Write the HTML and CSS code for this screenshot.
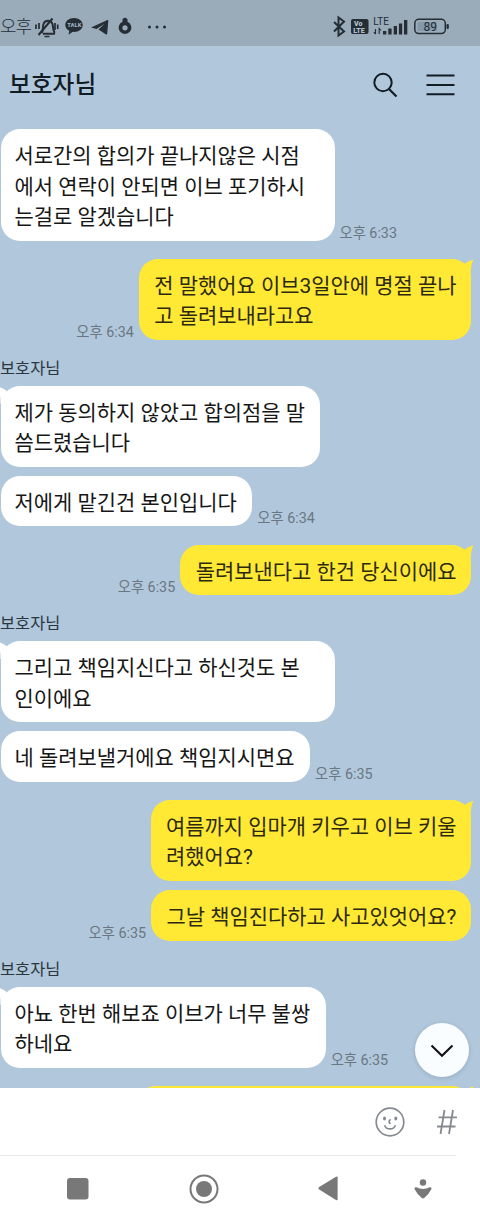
FILE: index.html
```html
<!DOCTYPE html>
<html lang="ko">
<head>
  <meta charset="UTF-8">
  <meta name="viewport" content="width=device-width, initial-scale=1.0">
  <title>보호자님</title>
  <link rel="stylesheet" href="styles.css">
</head>
<body>
  <!-- 상태 표시줄 -->
  <div class="status">
    <span class="status-time">오후</span>
    <svg class="status-left" width="140" height="24" viewBox="0 0 140 24">
      <g fill="none" stroke="#252d35" stroke-width="2">
        <path d="M9 18.800h12M7.500 18c2-2 1-6 2-9 1.300-4.500 7.500-4.500 9 0 .8 3 .2 6.500 2.300 9"/>
        <path d="M4.500 20L18.500 3.500"/>
        <path d="M2 9.500v4.500M5 8v6M21 8v7M23.700 9.500v4.500M10.500 21.500h5" stroke-width="1.700"/>
      </g>
      <path fill="#252d35" d="M40 3c-5 0-8.700 3-8.700 6.900 0 2.500 1.600 4.600 4 5.800l-.8 4 4.300-2.900 1.200.1c5 0 8.700-3.100 8.700-7S45 3 40 3z"/>
      <text x="33.300" y="12.300" class="talk">TALK</text>
      <path fill="#252d35" d="M57 12.500L73.500 5q1-.4.8.7L73.200 18.800q-.3 1.300-1.500.5L64.500 14.500l6-5.800-8 5.200z"/>
      <path fill="#252d35" d="M88.500 4l2.500-1.500L93.500 4v2.800a6.400 6.400 0 1 1-5 0z"/>
      <circle cx="91" cy="12.800" r="2.600" fill="#9aacba"/>
      <g fill="#252d35"><circle cx="115.500" cy="12" r="1.500"/><circle cx="123" cy="12" r="1.500"/><circle cx="130.500" cy="12" r="1.500"/></g>
    </svg>
    <svg class="status-right" width="120" height="24" viewBox="0 0 120 24">
      <path d="M2 7l10 9.500-5.500 4V2.500l5.500 4L2 16.500" fill="none" stroke="#252d35" stroke-width="2"/>
      <rect x="19" y="4" width="17.500" height="15" rx="2" fill="#252d35"/>
      <text x="22" y="10.800" class="volte">Vo</text>
      <text x="21.200" y="17.500" class="volte">LTE</text>
      <text x="41.300" y="9.800" class="lte">LTE</text>
      <path d="M43.500 14v5M41.800 17.200l1.700 1.800M47.200 19v-5.500l1.800 2" fill="none" stroke="#252d35" stroke-width="1.100"/>
      <g fill="#252d35">
        <rect x="51" y="16" width="3.300" height="3.500"/>
        <rect x="56.300" y="13.500" width="3.300" height="6"/>
        <rect x="61.700" y="11" width="3.300" height="8.500"/>
        <rect x="66.900" y="8.500" width="3.300" height="11"/>
        <rect x="72" y="5" width="3.300" height="14.500"/>
      </g>
      <rect x="82.800" y="4.300" width="30.500" height="14.300" rx="4" fill="none" stroke="#252d35" stroke-width="1.500"/>
      <rect x="85.500" y="7" width="19.500" height="9" rx="1" fill="#8499a9"/>
      <rect x="114.500" y="9" width="2.300" height="5" rx="1" fill="#252d35"/>
      <text x="91.500" y="15.800" class="battery">89</text>
    </svg>
  </div>

  <!-- 채팅방 헤더 -->
  <header>
    <h1>보호자님</h1>
    <svg width="26" height="28" viewBox="0 0 26 28">
      <circle cx="11" cy="11.500" r="8.700" fill="none" stroke="#111c25" stroke-width="2"/>
      <path d="M17 18l7.500 7.500" stroke="#111c25" stroke-width="2.200"/>
    </svg>
    <svg class="menu" width="29" height="28" viewBox="0 0 29 28">
      <path d="M.5 4.500h28M.5 14h28M.5 23.200h28" stroke="#111c25" stroke-width="2.100"/>
    </svg>
  </header>

  <!-- 대화 -->
  <main>
    <div class="row">
      <p class="bubble wide">서로간의 합의가 끝나지않은 시점<br>에서 연락이 안되면 이브 포기하시<br>는걸로 알겠습니다</p>
      <time>오후 6:33</time>
    </div>
    <div class="row me first">
      <time>오후 6:34</time>
      <p class="bubble tail">전 말했어요 이브3일안에 명절 끝나<br>고 돌려보내라고요</p>
    </div>
    <h2>보호자님</h2>
    <div class="row">
      <p class="bubble tail">제가 동의하지 않았고 합의점을 말<br>씀드렸습니다</p>
    </div>
    <div class="row next">
      <p class="bubble">저에게 맡긴건 본인입니다</p>
      <time>오후 6:34</time>
    </div>
    <div class="row me first">
      <time>오후 6:35</time>
      <p class="bubble tail">돌려보낸다고 한건 당신이에요</p>
    </div>
    <h2>보호자님</h2>
    <div class="row">
      <p class="bubble wide tail">그리고 책임지신다고 하신것도 본<br>인이에요</p>
    </div>
    <div class="row next">
      <p class="bubble">네 돌려보낼거에요 책임지시면요</p>
      <time>오후 6:35</time>
    </div>
    <div class="row me first">
      <p class="bubble tail">여름까지 입마개 키우고 이브 키울<br>려했어요?</p>
    </div>
    <div class="row me next">
      <time>오후 6:35</time>
      <p class="bubble">그날 책임진다하고 사고있엇어요?</p>
    </div>
    <h2>보호자님</h2>
    <div class="row">
      <p class="bubble tail">아뇨 한번 해보죠 이브가 너무 불쌍<br>하네요</p>
      <time>오후 6:35</time>
    </div>
    <div class="row me first">
      <p class="bubble tail cut"></p>
    </div>
    <button class="down" aria-label="맨 아래로">
      <svg width="24" height="14" viewBox="0 0 24 14"><path d="M1.500 1.500L12 11.700 22.500 1.500" fill="none" stroke="#111" stroke-width="2.100"/></svg>
    </button>
  </main>

  <!-- 입력창 -->
  <div class="input">
    <svg width="30" height="30" viewBox="0 0 30 30" fill="none" stroke="#858a90" stroke-width="1.700">
      <circle cx="15" cy="15" r="13.800"/>
      <path d="M9.500 18.200c2 5 9 5 11 0M15.800 12.500c-2.300.6-2.300 3.800 0 4"/>
      <ellipse cx="9.500" cy="11.500" rx="1.500" ry="1.900" fill="#858a90" stroke="none"/>
      <ellipse cx="20.800" cy="11.500" rx="1.500" ry="1.900" fill="#858a90" stroke="none"/>
    </svg>
    <svg class="hash" width="22" height="26" viewBox="0 0 22 26">
      <path d="M8.500 1L4.500 25M17 1l-4 24M2.500 8.300H21M1 17.500h18.500" fill="none" stroke="#858a90" stroke-width="1.800"/>
    </svg>
  </div>

  <!-- 내비게이션 바 -->
  <nav>
    <svg width="22" height="22" viewBox="0 0 22 22"><rect width="21.500" height="21.500" rx="3" fill="#787878"/></svg>
    <svg class="home" width="30" height="30" viewBox="0 0 30 30">
      <circle cx="15" cy="15" r="13.500" fill="none" stroke="#787878" stroke-width="2"/>
      <circle cx="15" cy="15" r="8" fill="#787878"/>
    </svg>
    <svg class="back" width="20" height="25" viewBox="0 0 20 25"><path d="M.8 11.300Q0 12.300.8 13.200L18 24q1.600.8 1.600-.8V1.500Q19.600 0 18 .8z" fill="#787878"/></svg>
    <svg width="18" height="20" viewBox="0 0 18 20">
      <circle cx="9" cy="3.500" r="3.200" fill="#787878"/>
      <path d="M2.300 8.300q6.700 3.200 13.400 0 2.300-.3 1.800 1.700-2.500 5-7.300 9.100-1.200.9-2.400 0Q3 15 .5 10 0 8 2.300 8.300z" fill="#787878"/>
    </svg>
  </nav>
</body>
</html>
```

FILE: styles.css
```css
* {
  margin: 0;
  padding: 0;
  box-sizing: border-box;
}
body {
  width: 480px;
  height: 1221px;
  display: flex;
  flex-direction: column;
  overflow: hidden;
  font-family: Roboto, "Noto Sans CJK KR", sans-serif;
  background: #fff;
  color: #161616;
}
svg {
  display: block;
  flex: none;
}

/* 상태 표시줄 */
.status {
  height: 46px;
  padding-top: 7px;
  display: flex;
  align-items: center;
  background: #9aacba;
  color: #252d35;
}
.status-time {
  width: 34px;
  font-size: 18px;
  font-weight: 300;
  letter-spacing: -1px;
  line-height: 24px;
  white-space: nowrap;
}
.status-right {
  margin-left: auto;
  margin-right: 28px;
}
.talk {
  font-size: 5.8px;
  font-weight: 900;
  fill: #9aacba;
}
.volte {
  font-size: 7px;
  font-weight: 900;
  fill: #b4c1cc;
}
.lte {
  font-size: 10px;
  fill: #252d35;
}
.battery {
  font-size: 12px;
  fill: #252d35;
}

/* 헤더 */
header {
  height: 83px;
  padding: 0 25px 5px 9px;
  display: flex;
  align-items: center;
  background: #b1c7db;
}
header h1 {
  flex: 1;
  font-size: 23.7px;
  font-weight: 500;
  line-height: 36px;
  color: #111c25;
}
header .menu {
  margin-left: 28px;
}

/* 대화 영역 */
main {
  position: relative;
  height: 959px;
  overflow: hidden;
  background: #b1c7db;
}
h2 {
  height: 46px;
  padding-top: 17px;
  font-size: 16.4px;
  font-weight: 400;
  line-height: 24px;
  color: #2b3640;
}
.row {
  display: flex;
  align-items: flex-end;
  gap: 5px;
  padding-left: 0.5px;
}
.me {
  justify-content: flex-end;
  padding-right: 9.5px;
}
.first {
  margin-top: 18.2px;
}
.next {
  margin-top: 9.2px;
}
.bubble {
  position: relative;
  padding: 12px 15.5px 8px 14px;
  border-radius: 19px;
  background: #fff;
  font-size: 20.95px;
  line-height: 30.5px;
  white-space: nowrap;
}
.wide {
  width: 334px;
}
.me .bubble {
  padding: 12px 14px 8px 15.5px;
  background: #ffe935;
  color: #2d2910;
}
.me .cut {
  width: 334px;
  height: 50px;
}
/* 말풍선 꼬리 */
.tail::before {
  content: "";
  position: absolute;
  top: 0;
  left: -3px;
  width: 14px;
  height: 18px;
  background: #fff;
  clip-path: path("M0 .8Q5 2 9 5V18H3Q3 6 0 .8z");
}
.me .tail::before {
  left: auto;
  right: -3px;
  background: #ffe935;
  clip-path: path("M14 .8Q9 2 5 5V18H11Q11 6 14 .8z");
}
time {
  font-size: 14.3px;
  line-height: 16px;
  color: #697783;
  white-space: nowrap;
}

/* 아래로 버튼 */
.down {
  position: absolute;
  right: 11px;
  bottom: 11px;
  width: 54px;
  height: 54px;
  display: flex;
  align-items: center;
  justify-content: center;
  border: none;
  border-radius: 50%;
  background: #fafdff;
  box-shadow: 0 1px 4px rgba(40, 60, 80, .2);
}
.down svg {
  margin-top: 2px;
}

/* 입력창 */
.input {
  width: 456px;
  height: 68px;
  display: flex;
  align-items: center;
  justify-content: flex-end;
  border-bottom: 1px solid #e9e9e9;
}
.input .hash {
  margin-left: 31px;
  margin-right: -2px;
}

/* 내비게이션 바 */
nav {
  height: 65px;
  padding: 0 48px 0 67px;
  display: flex;
  align-items: center;
  justify-content: space-between;
}
nav .home {
  margin-left: 24px;
}
nav .back {
  margin-left: 24px;
}
```
